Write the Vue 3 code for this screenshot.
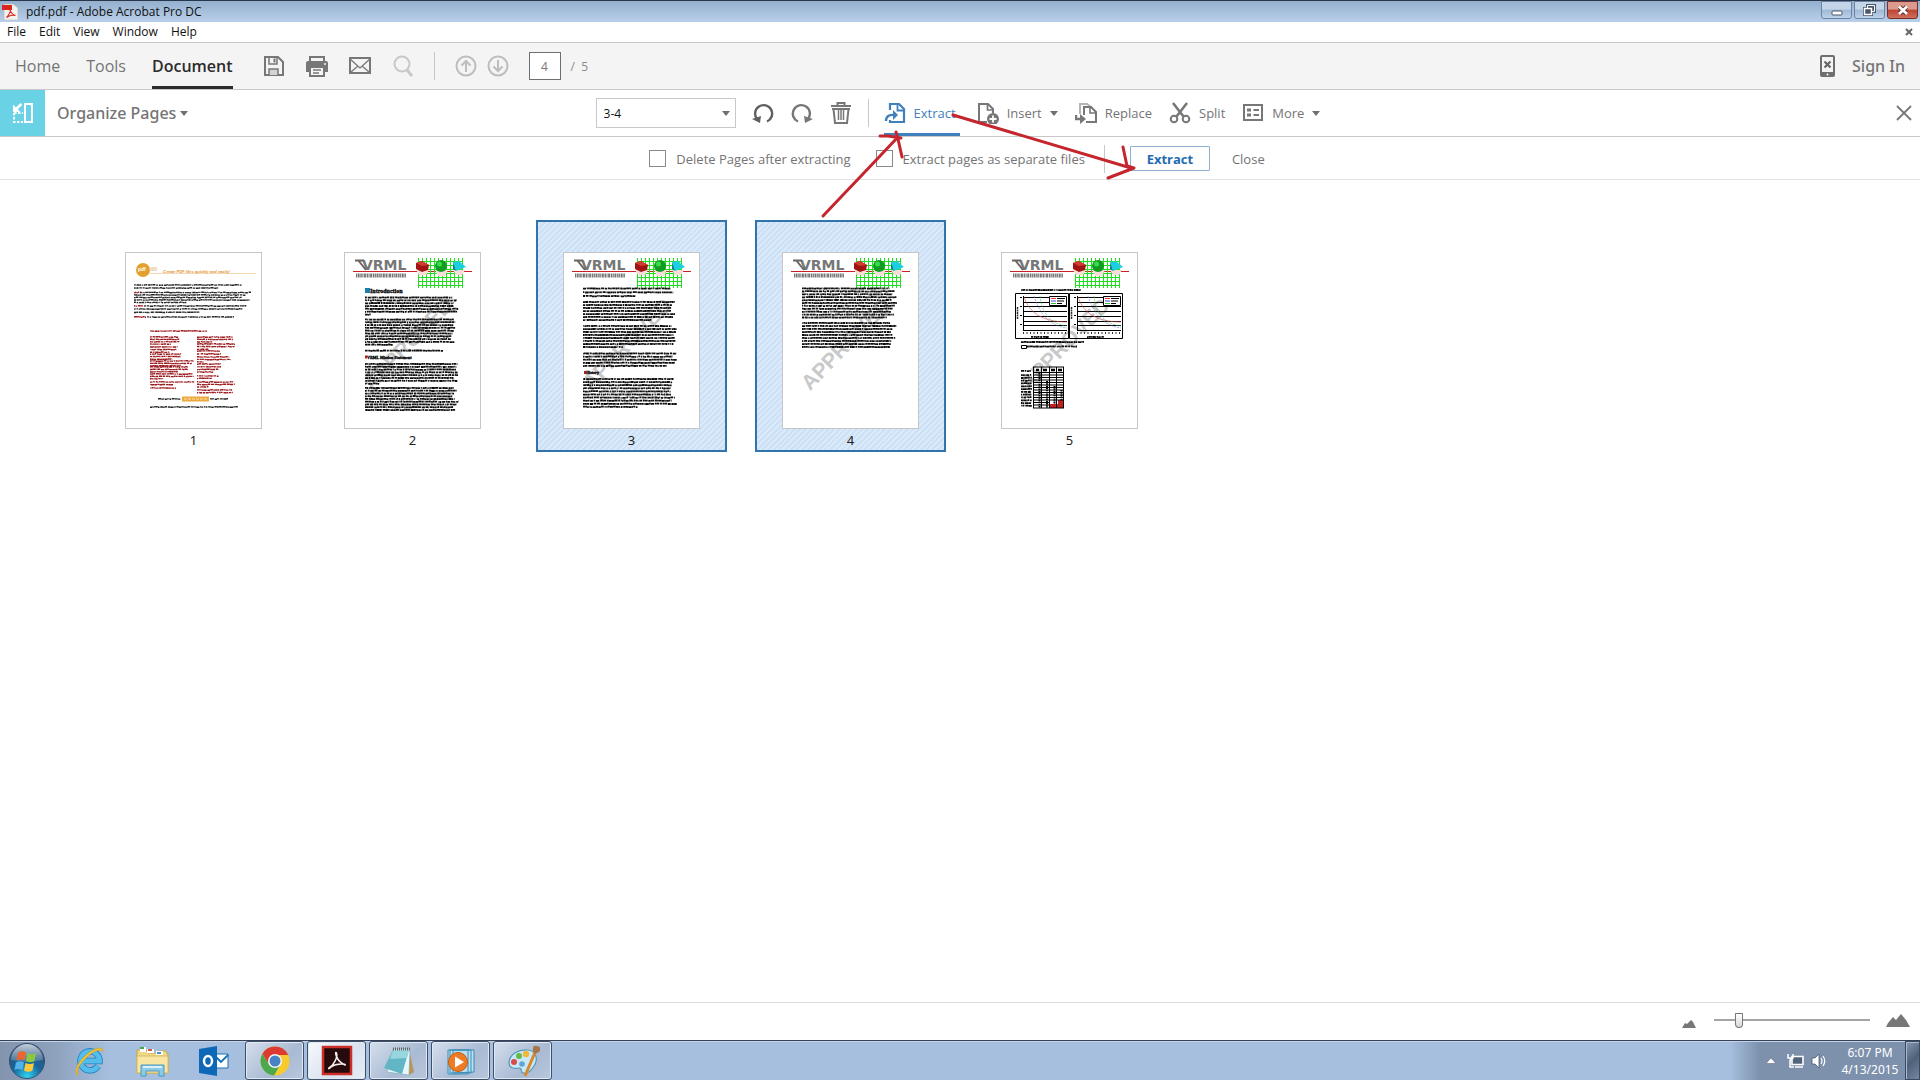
<script setup>
import { ref } from 'vue'

const menus = ['File', 'Edit', 'View', 'Window', 'Help']
const tabs = ['Home', 'Tools', 'Document']
const activeTab = ref('Document')
const pageNumber = ref('4')
const range = ref('3-4')
const deleteAfter = ref(false)
const separateFiles = ref(false)
const zoom = ref(14)
const selected = ref([3, 4])

// builds greeked text: one path with short dashes as letters and words
const greek = (blocks, seed) => {
  let s = seed
  const rand = () => {
    s = (s * 16807) % 2147483647
    return s / 2147483647
  }
  let d = ''
  blocks.forEach(([x, y, w, rows, pitch, last = 0.7]) => {
    for (let i = 0; i < rows; i++) {
      const end = x + w * (i === rows - 1 ? last : 0.92 + rand() * 0.08)
      let cx = x
      while (cx < end) {
        const len = Math.min(0.6 + rand() * 2.6, end - cx)
        const cy = y + i * pitch + (rand() - 0.5) * 0.5
        d += `M${cx.toFixed(1)} ${cy.toFixed(1)}h${len.toFixed(1)}`
        cx += len + (rand() < 0.3 ? 0.7 : 0.2)
      }
    }
  })
  return d
}

const pages = [
  {
    id: 1,
    text: greek([[9, 33, 117, 2, 3, 0.72], [15, 40.5, 111, 1, 3, 1], [9, 43, 117, 4, 2.5, 0.45], [19, 54, 103, 1, 3, 1], [9, 57, 115, 2, 3.3, 0.57], [22, 65, 87, 1, 3, 1], [33, 147, 23, 1, 3, 1], [85, 147, 18, 1, 3, 1], [25, 155, 88, 1, 3, 1]], 11),
    red: greek([[9, 40.5, 6, 1, 3, 1], [9, 54, 9, 1, 3, 1], [9, 65, 12, 1, 3, 1], [25, 79, 57, 1, 3, 1], [25, 85, 30, 4, 2.4], [25, 95, 28, 3, 2.6], [25, 102, 32, 3, 2.6], [25, 109, 44, 3, 2.4], [25, 115, 40, 3, 2.4], [25, 122, 44, 3, 2.4, 0.3], [25, 130, 46, 2, 2.6, 0.5], [25, 136, 26, 1, 2, 1], [72, 85, 38, 3, 2.4, 0.4], [72, 92, 38, 3, 2.6, 0.3], [72, 99, 24, 2, 3, 1], [72, 105, 34, 3, 2.5, 0.2], [72, 112, 24, 4, 2.7], [72, 124, 22, 2, 2.4], [72, 130, 38, 3, 2.5, 0.3], [72, 138, 36, 2, 2.6, 1]], 29)
  },
  {
    id: 2,
    text: greek([[21, 45.5, 95, 7, 2.85, 0.06], [21, 67.5, 93, 10, 2.8, 0.3], [21, 98.7, 78, 1, 3, 1], [21, 112, 95, 8, 2.8, 0.15], [21, 136, 94, 9, 2.75, 0.96]], 47)
  },
  {
    id: 3,
    text: greek([[20, 36.5, 95, 3, 3.8, 0.55], [20, 50, 95, 7, 3, 0.72], [20, 74, 95, 8, 3, 0.42], [20, 101.5, 95, 5, 3.1, 0.88], [20, 127, 94, 10, 3.1, 0.58]], 83)
  },
  {
    id: 4,
    text: greek([[20, 36.5, 95, 11, 2.9, 0.9], [20, 71, 95, 9, 3, 0.93]], 101)
  },
  {
    id: 5,
    text: greek([[20, 38, 60, 1, 3, 1], [20, 90, 63, 1, 3, 1], [26, 94.5, 50, 1, 3, 1], [20, 119, 11, 1, 3, 0.9], [20, 123, 11, 12, 2.8, 1], [30, 85, 18, 1, 1, 1], [86, 85, 17, 1, 1, 1]], 59)
  }
]

const charts = [14, 68]

const toggle = (id) => {
  selected.value = selected.value.includes(id)
    ? selected.value.filter(p => p !== id)
    : [...selected.value, id]
}
</script>

<template>
  <div class="window">
    <header class="title-bar">
      <svg class="app-icon" viewBox="0 0 16 16" width="16" height="16">
        <path d="M2 0h9l5 4v12H2z" fill="#f4f1ee" stroke="#b9b1ac" stroke-width=".6" />
        <path d="M0 1h10v5H0z" fill="#d9271c" />
        <path d="M4.500 13.500C7 11 9 7 8.300 5.500c-1-1 0 4.500 5.200 6-3-1-6-.2-9 2z" fill="none" stroke="#d9271c" stroke-width="1.100" />
      </svg>
      <span class="title">pdf.pdf - Adobe Acrobat Pro DC</span>
      <div class="window-buttons">
        <button aria-label="Minimize">
          <svg viewBox="0 0 30 16" width="30" height="16"><rect x="10" y="9" width="10" height="4" rx="1" fill="#fff" stroke="#48566b" /></svg>
        </button>
        <button aria-label="Restore">
          <svg viewBox="0 0 30 16" width="30" height="16" fill="none">
            <path d="M12.500 3.500h7v6h-7zM9.500 6.500h7v6h-7z" stroke="#48566b" stroke-width="3" />
            <path d="M12.500 3.500h7v6h-7z" stroke="#fff" />
            <path d="M9.500 6.500h7v6h-7z" fill="#48566b" stroke="#fff" stroke-width="1.500" />
          </svg>
        </button>
        <button class="red" aria-label="Close">
          <svg viewBox="0 0 30 16" width="30" height="16"><path d="M11.500 5l7 6.500M18.500 5l-7 6.500" stroke="#5b3538" stroke-width="4.500" /><path d="M11 4.500l8 7.500M19 4.500L11 12" stroke="#fff" stroke-width="2.600" /></svg>
        </button>
      </div>
    </header>

    <nav class="menu-bar">
      <button v-for="m in menus" :key="m">{{ m }}</button>
      <button class="doc-close" aria-label="Close document">
        <svg viewBox="0 0 8 8" width="8" height="8"><path d="M1 1l6 6M7 1L1 7" stroke="#666" stroke-width="2" /></svg>
      </button>
    </nav>

    <div class="main-bar">
      <div class="tabs">
        <button v-for="t in tabs" :key="t" :class="{ active: t === activeTab }" @click="activeTab = t">{{ t }}</button>
      </div>
      <div class="file-tools">
        <button aria-label="Save">
          <svg viewBox="0 0 22 22" width="22" height="22" fill="none" stroke="#777" stroke-width="2">
            <path d="M2 2h13l5 5v13H2z" /><path d="M6 2v7h8V2" stroke-width="1.500" /><path d="M11.500 3.500v4" /><path d="M6 20v-6h9v6" fill="#d4d4d4" stroke-width="1.500" />
          </svg>
        </button>
        <button aria-label="Print">
          <svg viewBox="0 0 22 22" width="22" height="22">
            <path d="M4 7V2h14v5" fill="none" stroke="#777" stroke-width="2" />
            <path d="M0 8q0-2 2-2h18q2 0 2 2v9h-4v-5H4v5H0z" fill="#777" /><circle cx="19" cy="9" r="1" fill="#f4f4f4" />
            <path d="M4 12h14v9H4z" fill="#f4f4f4" stroke="#777" stroke-width="2" /><path d="M7 15h8M7 18h6" stroke="#777" stroke-width="1.500" />
          </svg>
        </button>
        <button aria-label="Mail">
          <svg viewBox="0 0 22 22" width="22" height="22" fill="none" stroke="#777" stroke-width="2">
            <path d="M1 3h20v15H1z" /><path d="M1 4l10 9 10-9M2 17l7-6M20 17l-7-6" stroke-width="1.300" />
          </svg>
        </button>
        <button aria-label="Find">
          <svg viewBox="0 0 22 22" width="22" height="22" fill="none" stroke="#c8c8c8"><circle cx="10" cy="9" r="7.500" stroke-width="2" /><path d="M15 15l5 6" stroke-width="3" /></svg>
        </button>
      </div>
      <i class="divider"></i>
      <div class="page-nav">
        <button aria-label="Previous page">
          <svg viewBox="0 0 22 22" width="22" height="22" fill="none" stroke="#bdbdbd" stroke-width="2"><circle cx="11" cy="11" r="9.500" /><path d="M11 17V6M6.500 10.500L11 6l4.500 4.500" /></svg>
        </button>
        <button aria-label="Next page">
          <svg viewBox="0 0 22 22" width="22" height="22" fill="none" stroke="#bdbdbd" stroke-width="2"><circle cx="11" cy="11" r="9.500" /><path d="M11 5v11M6.500 11.500L11 16l4.500-4.500" /></svg>
        </button>
        <input v-model="pageNumber" class="page-input" aria-label="Page number">
        <span class="page-total">/&nbsp; 5</span>
      </div>
      <div class="account">
        <button aria-label="Mobile link">
          <svg viewBox="0 0 16 22" width="16" height="22"><rect x="1" y="1" width="13" height="20" rx="1" fill="#f4f4f4" stroke="#6f6f6f" stroke-width="2" /><path d="M1 17h13v4H1z" fill="#6f6f6f" /><path d="M4.500 6.500l6 6M10.500 6.500l-6 6" stroke="#666" stroke-width="2.200" /><circle cx="7.500" cy="19.500" r="1" fill="#fff" /></svg>
        </button>
        <button class="sign-in">Sign In</button>
      </div>
    </div>

    <div class="organize-bar">
      <div class="organize-left">
        <span class="tile">
          <svg viewBox="0 0 22 22" width="22" height="22" fill="none" stroke="#fff" stroke-width="2">
            <path d="M13 2h7v18h-7z" /><path d="M2 11v9h9M2 11h9" stroke-dasharray="2.500 1.500" /><path d="M9.500 2L4 7" stroke-width="2.500" /><path d="M1 2.500V10h7.500z" fill="#fff" stroke="none" />
          </svg>
        </span>
        <button class="organize-title">Organize Pages<i class="caret"></i></button>
      </div>
      <div class="organize-tools">
        <div class="range">
          <select v-model="range" aria-label="Page range">
            <option>3-4</option>
            <option>All Pages</option>
          </select>
          <i class="caret"></i>
        </div>
        <div class="edit-tools">
          <button aria-label="Rotate counterclockwise">
            <svg viewBox="0 0 22 22" width="22" height="22"><path d="M15 19.500A8.500 8.500 0 1 0 5 17" fill="none" stroke="#5f5f5f" stroke-width="2.400" /><path d="M0 17l9-3-1 7z" fill="#5f5f5f" /></svg>
          </button>
          <button aria-label="Rotate clockwise">
            <svg viewBox="0 0 22 22" width="22" height="22"><path d="M7 19.500A8.500 8.500 0 1 1 17 17" fill="none" stroke="#777" stroke-width="2.400" /><path d="M22 17l-9-3 1 7z" fill="#777" /></svg>
          </button>
          <button aria-label="Delete pages">
            <svg viewBox="0 0 22 24" width="22" height="24" fill="none" stroke="#777" stroke-width="2"><path d="M1 5h20M7.500 5V2h7v3M3.500 8l1.500 14h12l1.500-14M2 8h18" /><path d="M8.500 9v10M11 9v10M13.500 9v10" stroke-width="1.500" /></svg>
          </button>
        </div>
        <i class="divider"></i>
        <div class="commands">
          <button class="active">
            <svg viewBox="0 0 22 22" width="22" height="22" fill="none" stroke="#4080bc" stroke-width="2.200">
              <path d="M6 8V2h9l5 5v13H6v-2" /><path d="M13.500 2v6.500H20" stroke-width="1.800" /><path d="M2 19q0-7 9-6" stroke-width="2.400" /><path d="M9 8l5 5-5 5z" fill="#4080bc" stroke="none" />
            </svg>
            Extract
          </button>
          <button>
            <svg viewBox="0 0 22 22" width="22" height="22" fill="none" stroke="#777" stroke-width="2">
              <path d="M10 20H2V2h9l5 5v4" /><path d="M10.500 2v6H16" stroke-width="1.700" /><circle cx="16" cy="17" r="6" fill="#777" stroke="none" /><path d="M16 13.500v7M12.500 17h7" stroke="#fff" stroke-width="1.800" />
            </svg>
            Insert<i class="caret"></i>
          </button>
          <button>
            <svg viewBox="0 0 22 22" width="22" height="22" fill="none" stroke="#777" stroke-width="2">
              <path d="M5 12V2h7l4 3" stroke="#b5b5b5" /><path d="M9 13V5h7l5 5v10H11" /><path d="M15 5v6h6" stroke-width="1.600" /><path d="M1 13v4h6" stroke-width="2.400" /><path d="M5 12l6 5-6 5z" fill="#777" stroke="none" />
            </svg>
            Replace
          </button>
          <button>
            <svg viewBox="0 0 22 22" width="22" height="22" fill="none" stroke="#777" stroke-width="2">
              <path d="M4 1l10.500 13.500M18 1L7.500 14.500" stroke-width="2.600" /><circle cx="5" cy="17" r="3.300" /><circle cx="17" cy="17" r="3.300" />
            </svg>
            Split
          </button>
          <button>
            <svg viewBox="0 0 22 22" width="22" height="22" fill="none" stroke="#777" stroke-width="2">
              <path d="M2 3h18v15H2z" /><path d="M5 8h4M5 13h4" stroke-width="3" /><path d="M11.500 8H17M11.500 13H17" />
            </svg>
            More<i class="caret"></i>
          </button>
        </div>
      </div>
      <button class="panel-close" aria-label="Close tool">
        <svg viewBox="0 0 16 16" width="16" height="16"><path d="M1 1l14 14M15 1L1 15" stroke="#777" stroke-width="1.800" /></svg>
      </button>
    </div>

    <div class="extract-bar">
      <label><input v-model="deleteAfter" type="checkbox">Delete Pages after extracting</label>
      <label><input v-model="separateFiles" type="checkbox">Extract pages as separate files</label>
      <i class="divider"></i>
      <button class="extract">Extract</button>
      <button class="close">Close</button>
    </div>

    <main class="pages">
      <figure v-for="p in pages" :key="p.id" :class="{ selected: selected.includes(p.id) }" @click="toggle(p.id)">
        <svg class="sheet" viewBox="0 0 137 177" width="137" height="177">
          <rect x=".5" y=".5" width="136" height="176" fill="#fff" stroke="#c6c6c6" />
          <text v-if="p.id > 1" class="watermark" x="64" y="99" text-anchor="middle" transform="rotate(-46 64 92)">APPROVED</text>

          <template v-if="p.id > 1">
            <text class="vrml" x="18" y="18">VRML</text>
            <path d="M11 8.500h9M14 8l8 10" stroke="#666" stroke-width="2" />
            <path d="M9 19.500h119" stroke="#c81e24" />
            <path d="M12 23.500h50" stroke="#777" stroke-width="4" stroke-dasharray="1 .6 2 .7 1.500 .5" />
            <path d="M74.500 6v30M78.500 6v30M82.500 6v30M86.500 6v30M90.500 6v30M94.500 6v30M98.500 6v30M102.500 6v30M106.500 6v30M110.500 6v30M114.500 6v30M118.500 6v30M74 9.500h45M74 13.500h45M74 17.500h45M74 21.500h45M74 25.500h45M74 29.500h45M74 33.500h45" stroke="#1fe01f" stroke-width="1" />
            <path d="M72 18h13l-3 5h-7zM91 18h13l-3 6h-7zM109 18h12l-3 5h-6z" fill="#f7dcd8" />
            <path d="M72 11l6-2 7 4-1 5-6 2-6-3z" fill="#a01313" /><path d="M72 11l6-2 7 4-7 1z" fill="#d03b32" />
            <circle cx="97" cy="14" r="6" fill="#119b22" /><circle cx="95.500" cy="12" r="2.500" fill="#3bd94c" />
            <path d="M109 10l6-1 7 6-10 4z" fill="#1ccfe0" /><path d="M109 10l3 9-3-2z" fill="#087f96" />
          </template>

          <template v-if="p.id === 1">
            <rect x="57" y="144.500" width="27" height="5" fill="#eda941" />
            <path d="M59 147h23" stroke="#fbdfae" stroke-dasharray="3 1" />
            <circle cx="18" cy="18" r="7" fill="#e3a02f" />
            <text class="badge" x="13" y="19">pdf</text><text class="badge soft" x="24" y="19">995</text>
            <path d="M25 21.500h106" stroke="#f0c791" stroke-width=".7" />
            <text class="slogan" x="38" y="21">Create PDF files quickly and easily!</text>
            <path :d="p.red" fill="none" stroke="#9b1c20" stroke-width="1.400" />
          </template>

          <path :d="p.text" fill="none" stroke="#000" :stroke-width="p.id === 1 ? 1.400 : 1.800" :stroke-opacity="p.id === 1 ? 0.85 : 0.95" />

          <template v-if="p.id === 2">
            <rect x="21" y="36" width="5" height="5" fill="#1b7fae" />
            <text class="head" x="26" y="41">Introduction</text>
            <rect x="21" y="103.500" width="2" height="3" fill="#b51d27" />
            <text class="head small" x="23" y="107">VRML Mission Statement</text>
          </template>
          <template v-if="p.id === 3">
            <rect x="21" y="119" width="2" height="3" fill="#b51d27" />
            <text class="head small" x="23" y="122">History</text>
          </template>
          <template v-if="p.id === 5">
            <g v-for="x in charts" :key="x" :transform="`translate(${x} 41)`" fill="none">
              <path d="M.5 .5h53v45h-53z" stroke="#000" />
              <path d="M8 4.500h44M8 9.500h44M8 13.500h44M8 18.500h44M8 23.500h44M8 28.500h44M8 32.500h44" stroke="#000" />
              <path d="M8 37.500h44M8.500 3v34" stroke="#000" />
              <path d="M5 4.500h2M5 13.500h2M5 22.500h2M5 31.500h2" stroke="#000" />
              <path d="M8 40h44" stroke="#333" stroke-width="2" stroke-dasharray="1 2.500" />
              <path d="M2.500 14v12" stroke="#333" stroke-width="1.500" stroke-dasharray="2 .5" />
              <path d="M9 4Q17 29 52 29" stroke="#d84b51" stroke-width=".6" />
              <path d="M19 3Q28 32 52 35" stroke="#6f74d6" stroke-width=".6" stroke-dasharray="2 1" />
              <path d="M25 3Q28 30 52 33" stroke="#37b84b" stroke-width=".6" stroke-dasharray="2 1" />
              <path d="M34.500 3.500h17v9h-17z" fill="#fff" stroke="#000" />
              <path d="M36 5.500h5" stroke="#e33" /><path d="M36 8h5" stroke="#44e" /><path d="M36 10.500h5" stroke="#3b3" /><path d="M42 5.500h8M42 8h7M42 10.500h5" stroke="#000" />
            </g>
            <path d="M20.500 93.500h5v3h-5z" fill="none" stroke="#000" />
            <path d="M57 148h6v8H49v-4h8z" fill="#c02020" />
            <path d="M32.500 115v41M40.500 115v41M48.500 115v41M55.500 115v41M62.500 115v41M32 115h31M32 120.500h31M32 123h31M32 125.500h31M32 128h31M32 130.500h31M32 133h31M32 135.500h31M32 138h31M32 140.500h31M32 143h31M32 145.500h31M32 148h31M32 150.500h17M32 153h17M32 156h31" stroke="#000" stroke-width="1" />
            <path d="M35 118h3M42 118h4M50 118h4M57 118h4" stroke="#000" stroke-width="2.500" />
            <path d="M38.500 121v35M46 129v27M53.500 134v18M60.500 138v10" stroke="#000" stroke-width="2" stroke-dasharray="1.500 .7" />
          </template>
        </svg>
        <figcaption>{{ p.id }}</figcaption>
      </figure>
    </main>

    <footer class="zoom-bar">
      <svg class="small-hills" viewBox="0 0 14 8" width="14" height="8"><path d="M0 8l3-5 2 1 4-4 2 2 3 6z" fill="#777" /></svg>
      <input v-model="zoom" type="range" min="0" max="100" aria-label="Thumbnail size">
      <svg viewBox="0 0 24 13" width="24" height="13"><path d="M0 13l2-4 5-6 3 3 5-6 5 6 4 7z" fill="#777" /></svg>
    </footer>

    <div class="taskbar">
      <button class="launch" aria-label="Start">
        <svg viewBox="0 0 38 38" width="38" height="38">
          <defs>
            <radialGradient id="orb" cx=".5" cy=".95" r=".9"><stop offset="0" stop-color="#31d5f2" /><stop offset=".45" stop-color="#17699f" /><stop offset="1" stop-color="#344b6a" /></radialGradient>
            <linearGradient id="gloss" x2="0" y2="1"><stop offset="0" stop-color="#e5eef6" stop-opacity=".8" /><stop offset="1" stop-color="#e5eef6" stop-opacity=".15" /></linearGradient>
          </defs>
          <circle cx="19" cy="19" r="17.500" fill="url(#orb)" stroke="#355273" />
          <path d="M3 18a16 16 0 0 1 32 0q-16 4-32 0z" fill="url(#gloss)" />
          <path d="M10 10.500q4-2.500 8 0l-1.500 8q-4-2-8 0z" fill="#ee6532" /><path d="M19.500 11q4 2.500 8.500 0l-1.500 8q-4 2.500-8.500 0z" fill="#8cc83e" />
          <path d="M8 20.500q4-2.500 8 0l-1.500 7.500q-4-2-8 0z" fill="#51b3ea" /><path d="M17.500 21q4.500 2 8.500 0l-1.500 7.500q-4 2.500-8.500 0z" fill="#fcca3a" />
        </svg>
      </button>
      <button class="launch" aria-label="Internet Explorer">
        <svg viewBox="0 0 34 34" width="34" height="34" fill="none">
          <path d="M25 22a9.500 9.500 0 1 1 1.500-5H10" stroke="#2181bf" stroke-width="6.500" />
          <path d="M25 22a9.500 9.500 0 1 1 1.500-5H10" stroke="#55bdec" stroke-width="4.800" />
          <path d="M30 8c1-7-11-4-19 5C3 21 0 31 6 31c-4-2 0-11 8-18 6-6 14-9 16-5z" fill="#f6c631" stroke="#cf9a1c" stroke-width=".6" />
        </svg>
      </button>
      <button class="launch" aria-label="Explorer">
        <svg viewBox="0 0 34 34" width="34" height="34">
          <path d="M2 6h9l2 3h9l1-2h8l2 4v18H2z" fill="#f0d984" stroke="#c5a44c" /><path d="M5 3h6v5H5zM12 5h7v4h-7zM21 7h7v4h-7z" fill="#fff" />
          <path d="M5 3h4v2H5z" fill="#45a845" /><path d="M13 5h4v2h-4z" fill="#d8543a" /><path d="M22 8h4v2h-4z" fill="#3f93cf" />
          <path d="M2 12h31v17H2z" fill="#f8e7a4" stroke="#d6b95e" /><path d="M6 32V21h23v11h-5v-5H11v5z" fill="#8ccbe8" stroke="#4d96bd" /><path d="M8 23h19" stroke="#d8f2fb" stroke-width="2" />
        </svg>
      </button>
      <button class="launch" aria-label="Outlook">
        <svg viewBox="0 0 34 34" width="34" height="34">
          <path d="M17 10h14v14H17z" fill="#fff" stroke="#1670b9" /><path d="M17 11l7 7 7-7" fill="none" stroke="#1670b9" stroke-width="1.800" />
          <path d="M2 5l18-3v30L2 29z" fill="#0d69b8" /><ellipse cx="11" cy="17" rx="4" ry="5" fill="none" stroke="#fff" stroke-width="2.500" />
        </svg>
      </button>
      <div class="running">
        <button aria-label="Chrome">
          <svg viewBox="0 0 34 34" width="34" height="34">
            <circle cx="17" cy="17" r="14.500" fill="#f7cb2d" /><path d="M4.400 9.800A14.500 14.500 0 0 1 29.600 9.800L30 11H17a7 7 0 0 0-6 9.500z" fill="#dd3b31" /><path d="M4.400 9.800A14.500 14.500 0 0 0 16 31.500l6.500-11.300A7 7 0 0 1 11 20.500z" fill="#4aa94e" />
            <circle cx="17" cy="17" r="7" fill="#f5f5f5" /><circle cx="17" cy="17" r="5.500" fill="#4a83c4" />
          </svg>
        </button>
        <button class="current" aria-label="Adobe Acrobat">
          <svg viewBox="0 0 34 34" width="34" height="34"><rect x="3" y="3" width="28" height="27" fill="#270a0b" stroke="#cc2f28" stroke-width="2.500" /><path d="M9 24c5-3 9-11 7.500-15-2-3-1 8 8.500 12 2-1-8-2.500-14 2-2 2-3 2-2 1z" fill="none" stroke="#f7efef" stroke-width="1.500" /></svg>
        </button>
        <button aria-label="Notepad">
          <svg viewBox="0 0 34 34" width="34" height="34"><path d="M27 6l5 22-5 3z" fill="#ba9453" /><path d="M11 5h17l-1 26-22-3z" fill="#e8f6f8" stroke="#7ba6b3" stroke-width=".6" /><path d="M11 6h16l-7 24L2 24z" fill="#61b5c4" /><path d="M11 6h16l-2 8-17 1z" fill="#98d6de" /><path d="M11 5h17" stroke="#666" stroke-width="3" stroke-dasharray="1 1" /></svg>
        </button>
        <button aria-label="Media Player">
          <svg viewBox="0 0 34 34" width="34" height="34"><path d="M9 6h21v22l-21 1zM6 6h21v23H6zM4 6h20v24H4z" fill="#b9e0f2" stroke="#3d8cb6" /><circle cx="14" cy="18" r="9.500" fill="#ee7c25" stroke="#c25d12" /><path d="M11 12.500l9 5.500-9 5.500z" fill="#fff" /></svg>
        </button>
        <button aria-label="Paint">
          <svg viewBox="0 0 34 34" width="34" height="34"><path d="M3 19C3 10 13 5 22 6c9 1 10 10 6 16-3 5-7 8-11 7-3-1 0-5-4-5-5 1-10 0-10-5z" fill="#cae8f5" stroke="#5598bb" stroke-width="1.200" /><circle cx="8" cy="18" r="3" fill="#dc4a48" /><circle cx="13" cy="12" r="3" fill="#66b84a" /><circle cx="20" cy="10" r="3.200" fill="#f0b939" /><circle cx="16" cy="20" r="2.800" fill="#5da7d8" /><path d="M30 6L19 32" stroke="#d7892d" stroke-width="3" /><path d="M27 7q-1-6 4-5 6 1 2 6l-4 2z" fill="#a77749" /></svg>
        </button>
      </div>
      <div class="tray">
        <button aria-label="Show hidden icons"><svg viewBox="0 0 10 6" width="10" height="6"><path d="M0 5.500L5 0l5 5.500z" fill="#fff" stroke="#555f70" stroke-width=".5" /></svg></button>
        <svg class="network" viewBox="0 0 18 16" width="18" height="16"><path d="M5 3.500h11v8H5z" fill="#52647c" stroke="#fff" stroke-width="1.600" /><path d="M8 14h8M3 7v7h4M1 1v4h5V1M3.500 5v3" fill="none" stroke="#fff" stroke-width="1.500" /></svg>
        <svg class="sound" viewBox="0 0 16 16" width="16" height="16" fill="none" stroke="#fff" stroke-width="1.200"><path d="M1 5h3l4-4v14l-4-4H1z" fill="#fff" stroke="#3f4d61" stroke-width=".7" /><path d="M10 5q2 3 0 6M12 3q3.500 5 0 10" /></svg>
        <div class="clock"><span>6:07 PM</span><span>4/13/2015</span></div>
        <button class="show-desktop" aria-label="Show desktop"></button>
      </div>
    </div>

    <!-- hand-drawn pointers, centred like the toolbars -->
    <svg class="pointers" viewBox="0 0 340 110" width="340" height="110">
      <g fill="none" stroke="#c5262d" stroke-width="3" stroke-linecap="round" stroke-linejoin="round">
        <path d="M23 106l18-19 21-22 36-38M80 26h8l13 2M96 22l2 7 4 18" />
        <path d="M153 5l178 53M323 37l4 19 7 2-13 5-13 5" />
      </g>
    </svg>
  </div>
</template>

<style>
html, body { margin: 0; height: 100%; }
#app { height: 100%; }
</style>

<style scoped>
.window {
  position: relative; min-height: 100vh; display: flex; flex-direction: column; background: #fff; overflow: hidden;
  color: #747474; font-family: 'Open Sans', 'Noto Sans', sans-serif; font-size: 13px;
}
.window * { box-sizing: border-box; }
svg { display: block; flex: none; }
button { border: 0; padding: 0; background: none; color: inherit; font: inherit; cursor: pointer; }

.title-bar {
  height: 22px; display: flex; align-items: center; gap: 8px; padding: 0 2px; border-top: 1px solid #28374b;
  background: linear-gradient(#94b0ce, #b9d0ea); color: #111; font-size: 12px; line-height: 18px;
}
.window-buttons { margin-left: auto; align-self: flex-start; display: flex; gap: 2px; }
.window-buttons button { width: 31px; height: 18px; border: 1px solid #6a83a3; border-radius: 0 0 3px 3px; background: linear-gradient(#c4d5e8 45%, #9fb8d5 50%, #bdd3ea); }
.window-buttons .red { border-color: #762e2c; background: linear-gradient(#dc9a8c 45%, #bd4332 50%, #d0705c); }

.menu-bar { height: 21px; display: flex; align-items: center; gap: 13px; padding: 0 7px; border-bottom: 1px solid #c8c8c8; color: #111; font-size: 12px; line-height: 18px; }
.doc-close { margin-left: auto; }

.main-bar { height: 47px; display: flex; align-items: center; padding: 0 15px; background: #f4f4f4; border-bottom: 1px solid #c8c8c8; }
.tabs { display: flex; align-self: stretch; gap: 26px; font-size: 16px; }
.tabs button { border-bottom: 3px solid transparent; padding-top: 3px; font-weight: 500; }
.tabs .active { color: #2b2b2b; border-color: #2b2b2b; font-weight: 600; }
.file-tools { display: flex; gap: 21px; margin-left: 30px; }
.divider { width: 1px; height: 28px; background: #c8c8c8; }
.main-bar .divider { margin: 0 20px; }
.page-nav { display: flex; align-items: center; gap: 10px; }
.page-input { width: 32px; height: 28px; margin-left: 10px; padding: 0; border: 1px solid #6f6f6f; background: #fff; color: #777; font: inherit; font-size: 12px; text-align: center; }
.page-total { font-size: 12px; color: #8a8a8a; }
.account { margin-left: auto; display: flex; align-items: center; gap: 16px; }
.sign-in { font-family: 'Noto Sans', sans-serif; font-size: 16px; font-weight: 500; }

.organize-bar { height: 47px; display: grid; grid-template-columns: 1fr auto 1fr; padding-right: 4px; border-bottom: 1px solid #c8c8c8; }
.organize-left { display: flex; align-items: center; gap: 12px; }
.tile { width: 45px; align-self: stretch; display: grid; place-items: center; background: #69d2e4; }
.organize-title { display: flex; align-items: center; gap: 4px; font-family: 'Noto Sans', sans-serif; font-size: 16px; font-weight: 500; }
.caret { width: 0; border: 4px solid transparent; border-top: 5px solid #707070; border-bottom: 0; }
.organize-tools { display: flex; align-items: center; }
.range { position: relative; }
.range select { width: 140px; height: 30px; padding: 0 7px; appearance: none; border: 1px solid #c8c8c8; border-radius: 0; background: #fff; color: #111; font: inherit; font-size: 12px; }
.range .caret { position: absolute; right: 6px; top: 13px; pointer-events: none; }
.edit-tools { display: flex; align-items: center; gap: 17px; margin: 0 16px; }
.commands { display: flex; align-self: stretch; gap: 17px; margin-left: 15px; }
.commands button { display: flex; align-items: center; gap: 8px; border-bottom: 3px solid transparent; padding-top: 3px; }
.commands .active { color: #4080bc; border-color: #4080bc; padding-right: 4px; }
.panel-close { justify-self: end; margin-right: 4px; }

.extract-bar { height: 43px; display: flex; align-items: center; justify-content: center; padding-top: 1px; padding-right: 6px; border-bottom: 1px solid #e2e2e2; }
.extract-bar label { display: flex; align-items: center; gap: 10px; margin-right: 25px; }
.extract-bar input { width: 17px; height: 17px; margin: 0; appearance: none; border: 1px solid #8a8a8a; background: #fff; }
.extract-bar input:checked { background: #4080bc; }
.extract-bar label + .divider { margin-left: -6px; }
.extract-bar .divider { margin-right: 25px; }
.extract { width: 80px; height: 25px; border: 1px solid #8fb0d1; border-radius: 1px; color: #1f6cb3; font-weight: 700; }
.close { margin-left: 22px; }

.pages { flex: 1; display: flex; flex-wrap: wrap; align-content: flex-start; gap: 28px; padding: 40px 98px; }
.pages figure { width: 191px; height: 232px; margin: 0; padding-top: 30px; display: flex; flex-direction: column; align-items: center; border: 2px solid transparent; cursor: pointer; }
.pages .selected { border-color: #3173ad; background: repeating-linear-gradient(135deg, #cce1f6 0 2px, #dbeafa 2px 4px); }
figcaption { font-size: 13px; line-height: 22px; color: #222; font-family: 'Noto Sans', sans-serif; }
.sheet { font-family: 'Liberation Sans', sans-serif; }
.watermark { font-size: 21px; font-weight: 700; fill: #c9c9c9; }
.vrml { font-family: 'DejaVu Sans', sans-serif; font-size: 14px; font-weight: 700; fill: #777; }
.badge { font-size: 5px; font-weight: 700; fill: #fff; }
.soft { fill: #e8c48f; }
.slogan { font-size: 4px; font-weight: 700; font-style: italic; fill: #df9431; }
.head { font-family: 'Liberation Serif', serif; font-size: 6px; font-weight: 700; fill: #000; stroke: #000; stroke-width: 0.3px; }
.small { font-size: 4px; }

.zoom-bar { height: 38px; display: flex; align-items: center; justify-content: flex-end; gap: 16px; padding: 0 10px 2px; border-top: 1px solid #dedede; }
.small-hills { align-self: center; margin-top: 6px; margin-right: 2px; }
.zoom-bar input { width: 156px; height: 16px; margin: 0; appearance: none; background: linear-gradient(#a5a5a5, #a5a5a5) 0 6px / 100% 2px no-repeat; }
.zoom-bar input::-webkit-slider-thumb { appearance: none; width: 8px; height: 15px; border: 1px solid #777; border-radius: 1px 1px 5px 5px; background: linear-gradient(#fff, #d8d8d8); }

.taskbar {
  height: 40px; display: flex; align-items: center; border-top: 1px solid #354257; box-shadow: inset 0 1px #c5d3e6;
  background: linear-gradient(90deg, #8394ae 0, #8c9fbb 50px, #a6bfde 110px, #a6bfde calc(100% - 190px), #7d91ac calc(100% - 160px), #7d91ac);
}
.launch { width: 62px; display: grid; place-items: center; }
.launch:first-child { width: 59px; padding-right: 6px; }
.running { display: flex; align-self: stretch; gap: 3px; }
.running button { width: 59px; display: grid; place-items: center; border: 1px solid #3f4f68; border-radius: 3px; background: linear-gradient(135deg, #d5dfed, #a9bad3 60%, #b6c7dd); box-shadow: inset 0 0 0 1px #dfe8f3; }
.running .current { background: linear-gradient(135deg, #f7f9fc, #d9e2ee 60%, #e6edf6); }
.tray { margin-left: auto; align-self: stretch; display: flex; align-items: center; color: #fff; }
.network { margin-left: 11px; }
.sound { margin-left: 6px; }
.clock { width: 70px; margin-left: 8px; display: flex; flex-direction: column; align-items: center; font-family: 'Noto Sans', sans-serif; font-size: 12px; line-height: 17px; }
.show-desktop { width: 15px; align-self: stretch; border: 1px solid #3b4a60; background: linear-gradient(135deg, #8799b2, #4f6079 50%, #7487a1); box-shadow: inset 1px 1px #a9b8cc; }

.pointers { position: absolute; left: calc(50% - 160px); top: 110px; pointer-events: none; }
</style>
